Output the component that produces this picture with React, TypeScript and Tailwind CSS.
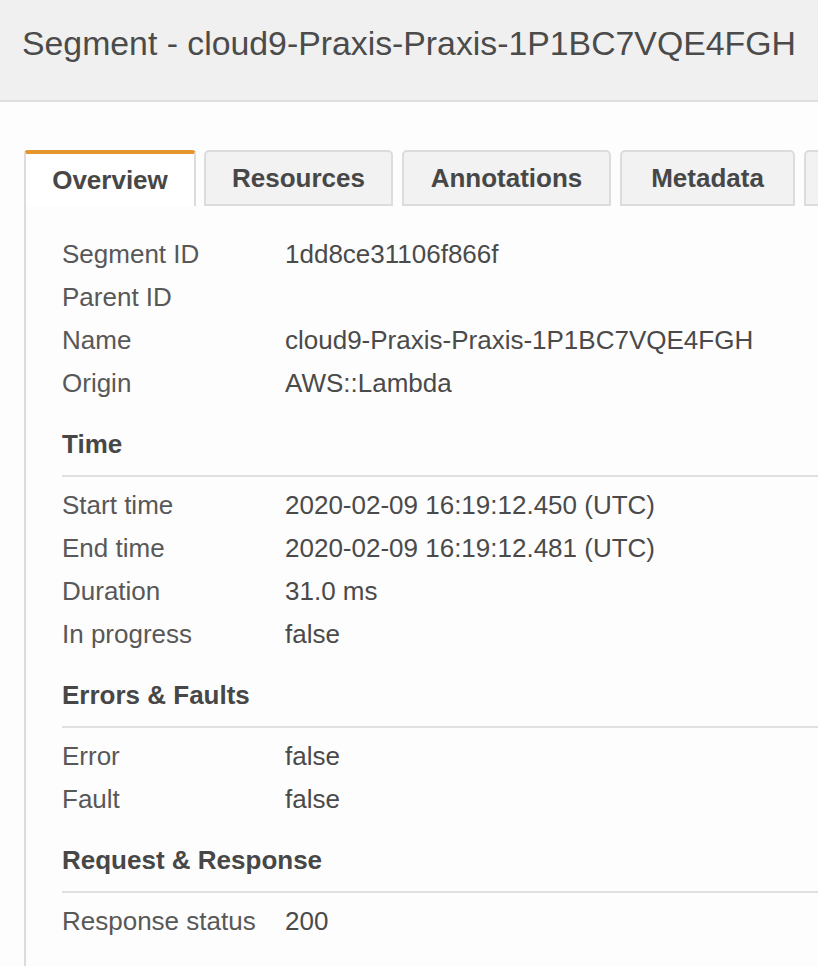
import React from "react";

type Row = { label: string; value: string };

const overview: Row[] = [
  { label: "Segment ID", value: "1dd8ce31106f866f" },
  { label: "Parent ID", value: "" },
  { label: "Name", value: "cloud9-Praxis-Praxis-1P1BC7VQE4FGH" },
  { label: "Origin", value: "AWS::Lambda" },
];

const sections: { title: string; rows: Row[] }[] = [
  {
    title: "Time",
    rows: [
      { label: "Start time", value: "2020-02-09 16:19:12.450 (UTC)" },
      { label: "End time", value: "2020-02-09 16:19:12.481 (UTC)" },
      { label: "Duration", value: "31.0 ms" },
      { label: "In progress", value: "false" },
    ],
  },
  {
    title: "Errors & Faults",
    rows: [
      { label: "Error", value: "false" },
      { label: "Fault", value: "false" },
    ],
  },
  {
    title: "Request & Response",
    rows: [{ label: "Response status", value: "200" }],
  },
];

const tabs = [
  { name: "Resources", w: "w-[189px]" },
  { name: "Annotations", w: "ml-[1px] w-[209px]" },
  { name: "Metadata", w: "ml-[1px] w-[175px]" },
  { name: "", w: "ml-[1px] w-[180px]" },
];

const DetailRow: React.FC<Row> = ({ label, value }) => (
  <div className="flex h-[43px] items-center">
    <div className="w-[223px] shrink-0 text-[#585858]">{label}</div>
    <div className="whitespace-nowrap text-[#4a4a4a]">{value}</div>
  </div>
);

const App: React.FC = () => {
  return (
    <div
      className="min-h-screen w-full overflow-hidden bg-[#fdfdfd] text-[26px]"
      style={{ fontFamily: '"Liberation Sans", Arial, sans-serif' }}
    >
      {/* header */}
      <div className="h-[102px] border-b-2 border-[#dedede] bg-[#f0f0f0] pl-[22px] pt-[25px]">
        <h1 className="whitespace-nowrap text-[33.8px] leading-[37px] text-[#4b4b4b]">
          Segment - cloud9-Praxis-Praxis-1P1BC7VQE4FGH
        </h1>
      </div>

      <div className="pl-[24px] pt-[48px]">
        {/* tabs */}
        <div className="flex w-[1100px] items-end gap-[8px]">
          <div className="flex h-[56px] w-[172px] items-center justify-center rounded-t-[4px] border-x-2 border-t-[4px] border-x-[#dcdcdc] border-t-[#e5962e] bg-white font-bold text-[#474747]">
            Overview
          </div>
          {tabs.map((t, i) => (
            <div
              key={i}
              className={
                "flex h-[56px] items-center justify-center rounded-t-[5px] border-2 border-[#dcdcdc] bg-[#f2f2f2] font-bold text-[#474747] " +
                t.w
              }
            >
              {t.name}
            </div>
          ))}
        </div>

        {/* panel */}
        <div className="border-l-2 border-[#dcdcdc] pb-[40px] pl-[36px] pt-[27px]">
          {overview.map((r) => (
            <DetailRow key={r.label} {...r} />
          ))}

          {sections.map((s) => (
            <div key={s.title}>
              <div className="mt-[24px] border-b-2 border-[#e0e0e0] pb-[16px] font-bold leading-[30px] text-[#474747]">
                {s.title}
              </div>
              <div className="pt-[7px]">
                {s.rows.map((r) => (
                  <DetailRow key={r.label} {...r} />
                ))}
              </div>
            </div>
          ))}
        </div>
      </div>
    </div>
  );
};

export default App;
